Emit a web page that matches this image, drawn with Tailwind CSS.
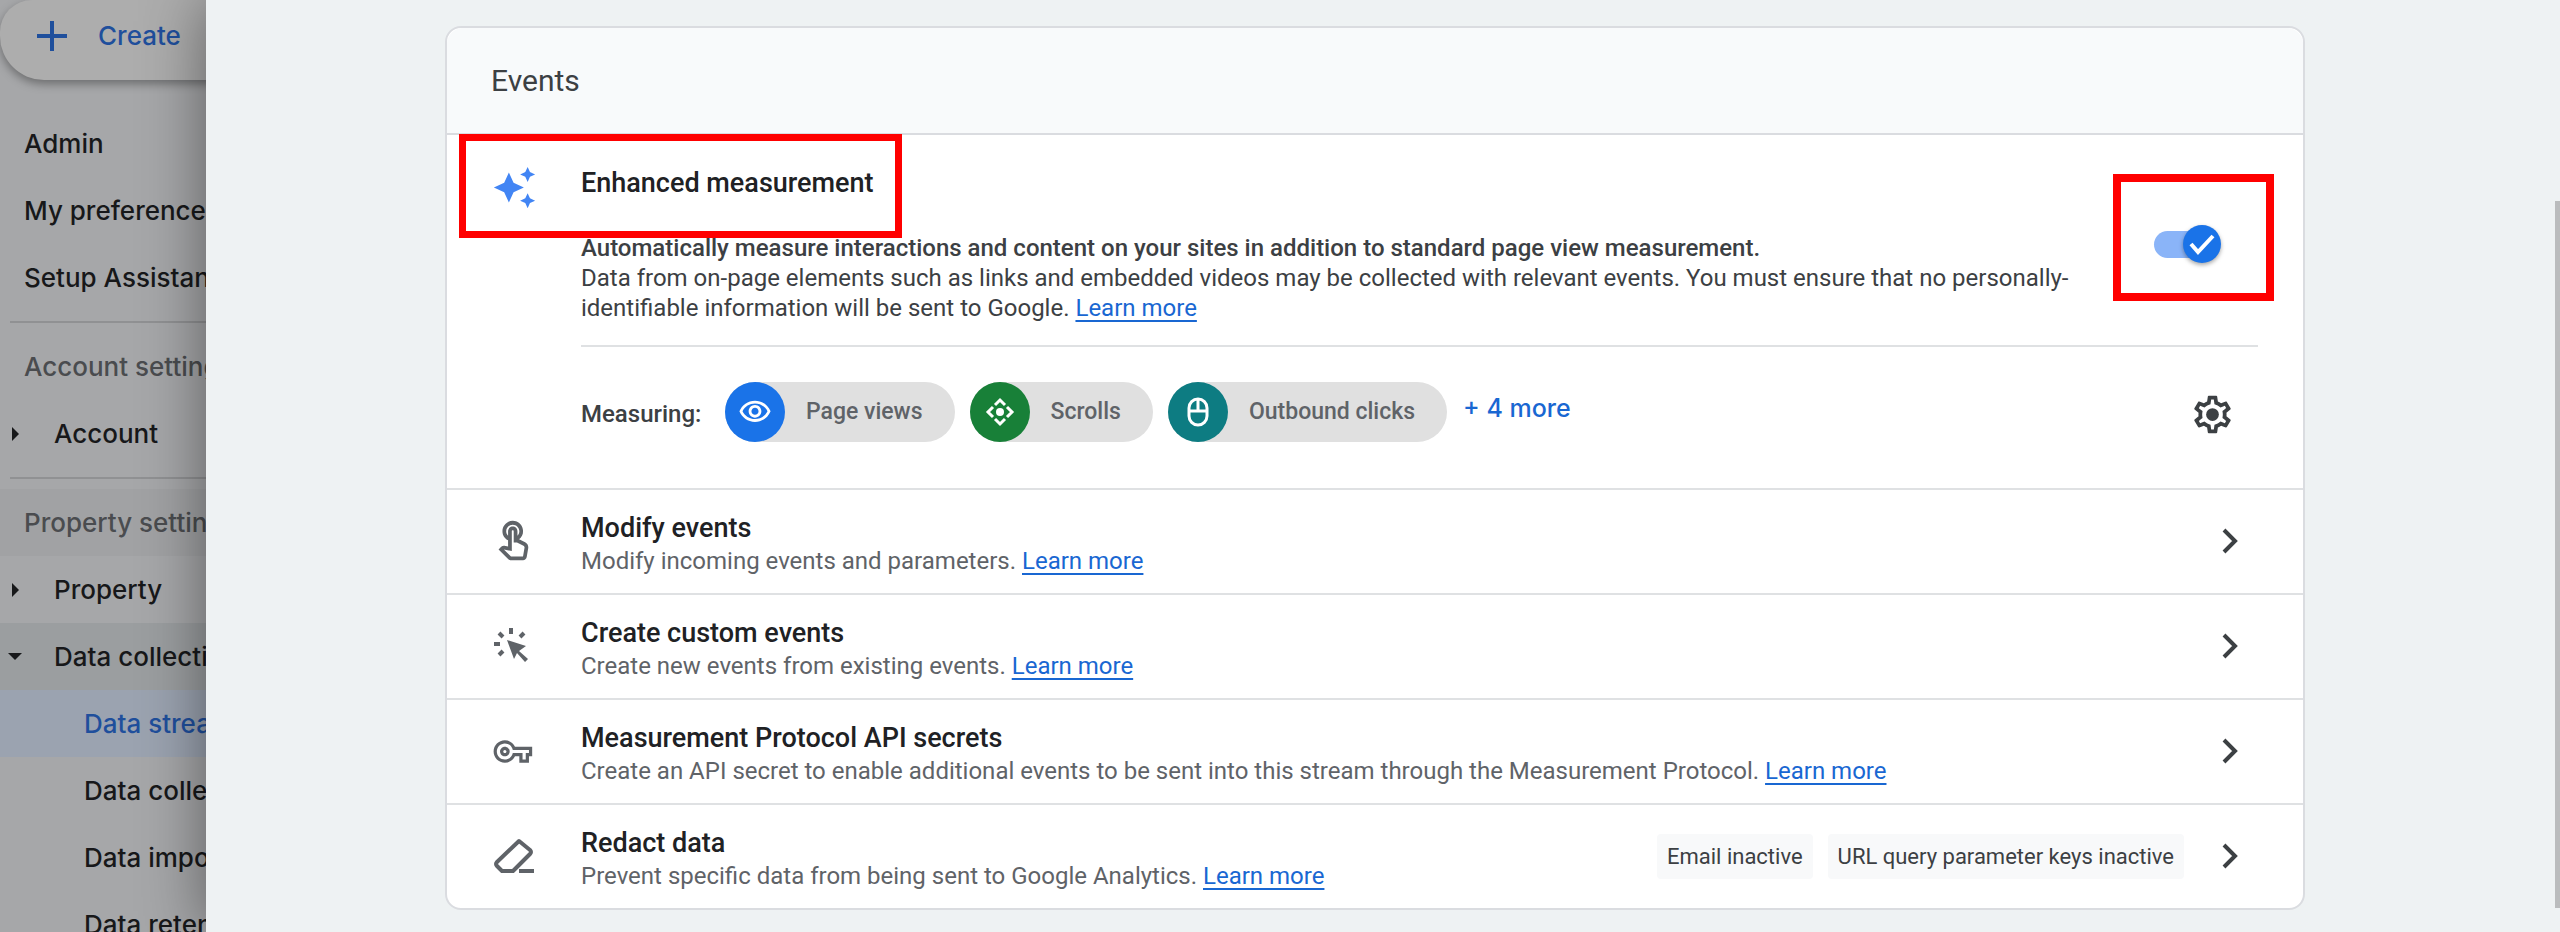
<!DOCTYPE html>
<html lang="en">
<head>
    <meta charset="UTF-8">
    <meta name="viewport" content="width=device-width, initial-scale=1.0">
    <title>Data streams</title>
    <script src="https://cdn.jsdelivr.net/npm/@tailwindcss/browser@4"></script>
</head>
<body class="h-screen overflow-hidden flex bg-[#eef2f3] text-[22px] leading-[30px] text-[#3c4043] font-['Roboto',sans-serif]">

    <!-- Sidebar, dimmed behind the panel -->
    <aside class="w-[206px] shrink-0 overflow-hidden whitespace-nowrap bg-[#a6a7a9] text-[#17181a] text-[26px] font-medium font-['Inter',sans-serif]">
        <div class="h-[110px]">
            <button type="button" class="w-[260px] h-20 pt-1 pb-3 pl-[36px] rounded-bl-[44px] rounded-tl-[32px] bg-[#adadad] shadow-[0_4px_10px_rgba(0,0,0,0.35)] flex items-center gap-[30px] text-[#1f4f9c]">
                <svg class="size-8" viewBox="0 0 32 32" fill="none" stroke="currentColor" stroke-width="4"><path d="M16 1v30M1 16h30"></path></svg>
                <span>Create</span>
            </button>
        </div>
        <nav>
            <a href="#" class="flex items-center h-[67px] pl-6">Admin</a>
            <a href="#" class="flex items-center h-[67px] pl-6">My preferences</a>
            <a href="#" class="flex items-center h-[67px] pl-6">Setup Assistant</a>
            <hr class="ml-2.5 mt-2.5 mb-2.5 border-t-2 border-[#909193]">
            <h2 class="flex items-center h-[67px] pl-6 text-[#4a4c4f]">Account settings</h2>
            <a href="#" class="flex items-center h-[67px] pl-3">
                <svg class="w-[7px] h-3.5 mr-[35px] shrink-0" viewBox="0 0 7 14" fill="currentColor"><path d="M0 0l7 7-7 7z"></path></svg>
                Account
            </a>
            <hr class="ml-2.5 mt-2.5 mb-2.5 border-t-2 border-[#909193]">
            <h2 class="flex items-center h-[67px] pl-6 bg-[#a1a2a4] text-[#4a4c4f]">Property settings</h2>
            <a href="#" class="flex items-center h-[67px] pl-3">
                <svg class="w-[7px] h-3.5 mr-[35px] shrink-0" viewBox="0 0 7 14" fill="currentColor"><path d="M0 0l7 7-7 7z"></path></svg>
                Property
            </a>
            <a href="#" class="flex items-center h-[67px] pl-2 bg-[#9b9ea0]">
                <svg class="w-3.5 h-[7px] mr-8 shrink-0" viewBox="0 0 14 7" fill="currentColor"><path d="M0 0h14l-7 7z"></path></svg>
                Data collection
            </a>
            <a href="#" class="flex items-center h-[67px] pl-[84px] bg-[#9ba3b0] text-[#1f4f9c]">Data streams</a>
            <a href="#" class="flex items-center h-[67px] pl-[84px]">Data collection</a>
            <a href="#" class="flex items-center h-[67px] pl-[84px]">Data import</a>
            <a href="#" class="flex items-center h-[67px] pl-[84px]">Data retention</a>
        </nav>
    </aside>

    <!-- Panel -->
    <main class="relative flex-1 min-w-0 pt-[26px] pl-[239px] pr-[255px] bg-[#eef2f3] shadow-[0_0_60px_rgba(0,0,0,0.45)]">
        <section class="rounded-2xl border-2 border-[#dadce0] bg-white">
            <header class="flex items-center h-[107px] px-11 rounded-t-2xl border-b-2 border-[#dadce0] bg-[#f8fafb]">
                <h1 class="text-[30px]">Events</h1>
            </header>

            <!-- Enhanced measurement -->
            <div class="relative flex gap-11 pt-[30px] pb-[46px] px-[45px]">
                <div class="absolute left-3 -top-px w-[443px] h-[104px] border-[7px] border-[#ff0000]"></div>
                <svg class="size-[45px] shrink-0 text-[#4285f4]" viewBox="0 0 24 24" fill="currentColor"><path d="M19 9l1.25-2.75L23 5l-2.75-1.25L19 1l-1.25 2.75L15 5l2.75 1.25L19 9zm-7.5.5L9 4 6.5 9.5 1 12l5.5 2.5L9 20l2.5-5.5L17 12l-5.5-2.5zM19 15l-1.25 2.75L15 19l2.75 1.25L19 23l1.25-2.75L23 19l-2.75-1.25L19 15z"></path></svg>
                <div class="flex-1 min-w-0">
                    <div class="flex items-center justify-between pb-[22px] border-b-2 border-[#dfe1e3]">
                        <div class="max-w-[1510px]">
                            <h2 class="text-[27px] leading-9 font-medium text-[#202124]">Enhanced measurement</h2>
                            <p class="mt-8 text-[24px] leading-[30px] font-medium">Automatically measure interactions and content on your sites in addition to standard page view measurement.</p>
                            <p class="text-[24px] leading-[30px]">Data from on-page elements such as links and embedded videos may be collected with relevant events. You must ensure that no personally-identifiable information will be sent to Google. <a href="#" class="text-[#1967d2] underline underline-offset-4">Learn more</a></p>
                        </div>
                        <label class="relative flex items-center w-[67px] h-[38px] mr-[37px]">
                            <input type="checkbox" role="switch" checked aria-label="Enhanced measurement" class="appearance-none w-[60px] h-[27px] rounded-full bg-[#8ab4f8]">
                            <span class="absolute right-0 top-0 flex items-center justify-center size-[38px] rounded-full bg-[#1a73e8] shadow-[0_2px_4px_rgba(0,0,0,0.35)]">
                                <svg class="size-7" viewBox="0 0 28 28" fill="none" stroke="#fff" stroke-width="4"><path d="M3 14l7 8L25 6"></path></svg>
                            </span>
                            <span class="absolute -left-[41px] -top-[51px] w-[161px] h-[127px] border-8 border-[#ff0000]"></span>
                        </label>
                    </div>
                    <div class="flex items-center mt-[35px]">
                        <span class="w-[144px] pt-1 text-[24px] font-medium">Measuring:</span>
                        <ul class="flex gap-[15px] text-[23px] font-medium text-[#5f6368]">
                            <li class="flex items-center h-[60px] pr-8 rounded-full bg-[#e0e0e0]">
                                <span class="flex items-center justify-center size-[60px] mr-[21px] rounded-full bg-[#1a73e8] text-white">
                                    <svg class="size-[34px]" viewBox="0 0 24 24" fill="currentColor"><path d="M12 6c3.79 0 7.17 2.13 8.82 5.5C19.17 14.87 15.79 17 12 17s-7.17-2.13-8.82-5.5C4.83 8.13 8.21 6 12 6m0-2C7 4 2.73 7.11 1 11.5 2.73 15.89 7 19 12 19s9.27-3.11 11-7.5C21.27 7.11 17 4 12 4zm0 5c1.38 0 2.5 1.12 2.5 2.5S13.38 14 12 14s-2.5-1.12-2.5-2.5S10.62 9 12 9m0-2c-2.48 0-4.5 2.02-4.5 4.5S9.52 16 12 16s4.5-2.02 4.5-4.5S14.48 7 12 7z"></path></svg>
                                </span>
                                Page views
                            </li>
                            <li class="flex items-center h-[60px] pr-8 rounded-full bg-[#e0e0e0]">
                                <span class="flex items-center justify-center size-[60px] mr-[21px] rounded-full bg-[#188038] text-white">
                                    <svg class="size-[34px]" viewBox="0 0 34 34" fill="none" stroke="currentColor" stroke-width="3">
                                        <circle cx="17" cy="17" r="4" fill="currentColor" stroke="none"></circle>
                                        <path d="M12 10l5-5 5 5M12 24l5 5 5-5M10 12l-5 5 5 5M24 12l5 5-5 5"></path>
                                    </svg>
                                </span>
                                Scrolls
                            </li>
                            <li class="flex items-center h-[60px] pr-8 rounded-full bg-[#e0e0e0]">
                                <span class="flex items-center justify-center size-[60px] mr-[21px] rounded-full bg-[#0d7c82] text-white">
                                    <svg class="size-[34px]" viewBox="0 0 34 34" fill="none" stroke="currentColor" stroke-width="3">
                                        <rect x="8" y="4" width="18" height="26" rx="9"></rect>
                                        <path d="M8 16h18M17 4v12"></path>
                                    </svg>
                                </span>
                                Outbound clicks
                            </li>
                        </ul>
                        <button type="button" class="ml-4 pb-2 text-[25px] font-medium text-[#1967d2] font-['Inter',sans-serif]">+ 4 more</button>
                        <button type="button" aria-label="Settings" class="ml-auto mr-[23px] pt-1">
                            <svg class="size-[45px]" viewBox="0 0 24 24" fill="currentColor"><path d="M19.43 12.98c.04-.32.07-.64.07-.98 0-.34-.03-.66-.07-.98l2.11-1.65c.19-.15.24-.42.12-.64l-2-3.46c-.09-.16-.26-.25-.44-.25-.06 0-.12.01-.17.03l-2.49 1c-.52-.4-1.08-.73-1.69-.98l-.38-2.65C14.46 2.18 14.25 2 14 2h-4c-.25 0-.46.18-.49.42l-.38 2.65c-.61.25-1.17.59-1.69.98l-2.49-1c-.06-.02-.12-.03-.18-.03-.17 0-.34.09-.43.25l-2 3.46c-.13.22-.07.49.12.64l2.11 1.65c-.04.32-.07.65-.07.98 0 .33.03.66.07.98l-2.11 1.65c-.19.15-.24.42-.12.64l2 3.46c.09.16.26.25.44.25.06 0 .12-.01.17-.03l2.49-1c.52.4 1.08.73 1.69.98l.38 2.65c.03.24.24.42.49.42h4c.25 0 .46-.18.49-.42l.38-2.65c.61-.25 1.17-.59 1.69-.98l2.49 1c.06.02.12.03.18.03.17 0 .34-.09.43-.25l2-3.46c.12-.22.07-.49-.12-.64l-2.11-1.65zm-1.98-1.71c.04.31.05.52.05.73 0 .21-.02.43-.05.73l-.14 1.13.89.7 1.08.84-.7 1.21-1.27-.51-1.04-.42-.9.68c-.43.32-.84.56-1.25.73l-1.06.43-.16 1.13-.2 1.35h-1.4l-.19-1.35-.16-1.13-1.06-.43c-.43-.18-.83-.41-1.23-.71l-.91-.7-1.06.43-1.27.51-.7-1.21 1.08-.84.89-.7-.14-1.13c-.03-.31-.05-.54-.05-.74s.02-.43.05-.73l.14-1.13-.89-.7-1.08-.84.7-1.21 1.27.51 1.04.42.9-.68c.43-.32.84-.56 1.25-.73l1.06-.43.16-1.13.2-1.35h1.39l.19 1.35.16 1.13 1.06.43c.43.18.83.41 1.23.71l.91.7 1.06-.43 1.27-.51.7 1.21-1.07.85-.89.7.14 1.13z"></path><circle cx="12" cy="12" r="3.4"></circle></svg>
                        </button>
                    </div>
                </div>
            </div>

            <!-- Rows -->
            <div class="flex items-center h-[105px] pl-[45px] pr-[51px] border-t-2 border-[#dfe1e3]">
                <svg class="size-[45px] mr-11 text-[#5f6368]" viewBox="0.5 0 24 24" fill="currentColor"><path d="M18.19 12.44l-3.24-1.62c1.29-1 2.12-2.56 2.12-4.32 0-3.03-2.47-5.5-5.5-5.5s-5.5 2.47-5.5 5.5c0 2.13 1.22 3.98 3 4.89v3.26c-2.15-.46-2.02-.44-2.26-.44-.53 0-1.03.21-1.41.59L4 16.22l5.09 5.09c.43.44 1.03.69 1.65.69h6.3c.98 0 1.81-.7 1.97-1.67l.8-4.71c.22-1.3-.43-2.58-1.62-3.18zm-.35 2.85l-.8 4.71h-6.3c-.09 0-.17-.04-.24-.1l-3.68-3.68 4.25.89V6.5c0-.28.22-.5.5-.5s.5.22.5.5v6h1.76l3.46 1.73c.4.2.62.63.55 1.06zM8.07 6.5c0-1.93 1.57-3.5 3.5-3.5s3.5 1.57 3.5 3.5c0 .95-.38 1.81-1 2.44V6.5c0-1.38-1.12-2.5-2.5-2.5s-2.5 1.12-2.5 2.5v2.44c-.62-.63-1-1.49-1-2.44z"></path></svg>
                <div class="flex-1 pt-0.5">
                    <h2 class="text-[27px] leading-9 font-medium text-[#202124]">Modify events</h2>
                    <p class="text-[24px] leading-[30px] text-[#5f6368]">Modify incoming events and parameters. <a href="#" class="text-[#1967d2] underline underline-offset-4">Learn more</a></p>
                </div>
                <button type="button" aria-label="Open Modify events">
                    <svg class="size-[45px]" viewBox="0 0 45 45" fill="none" stroke="currentColor" stroke-width="4"><path d="M17 11l11 11-11 11"></path></svg>
                </button>
            </div>
            <div class="flex items-center h-[105px] pl-[45px] pr-[51px] border-t-2 border-[#dfe1e3]">
                <svg class="size-[45px] mr-11 text-[#5f6368]" viewBox="0 0 45 45" fill="currentColor"><path d="M15 16l19 6-7 5 9 8-3 3-8-9-3 6z"></path><path d="M19 4v6M7 9l4 4M32 9l-4 4M2 20h6M7 31l4-4" fill="none" stroke="currentColor" stroke-width="4"></path></svg>
                <div class="flex-1 pt-0.5">
                    <h2 class="text-[27px] leading-9 font-medium text-[#202124]">Create custom events</h2>
                    <p class="text-[24px] leading-[30px] text-[#5f6368]">Create new events from existing events. <a href="#" class="text-[#1967d2] underline underline-offset-4">Learn more</a></p>
                </div>
                <button type="button" aria-label="Open Create custom events">
                    <svg class="size-[45px]" viewBox="0 0 45 45" fill="none" stroke="currentColor" stroke-width="4"><path d="M17 11l11 11-11 11"></path></svg>
                </button>
            </div>
            <div class="flex items-center h-[105px] pl-[45px] pr-[51px] border-t-2 border-[#dfe1e3]">
                <svg class="size-[45px] mr-11 text-[#5f6368]" viewBox="-1 -2 28 28" fill="currentColor"><path d="M22 19h-6v-4h-2.68c-1.14 2.42-3.6 4-6.32 4-3.86 0-7-3.14-7-7s3.14-7 7-7c2.72 0 5.17 1.58 6.32 4H24v6h-2v4zm-4-2h2v-4h2v-2H11.94l-.23-.67C11.01 8.34 9.11 7 7 7c-2.76 0-5 2.24-5 5s2.24 5 5 5c2.11 0 4.01-1.34 4.71-3.33l.23-.67H18v4zM7 15c-1.65 0-3-1.35-3-3s1.35-3 3-3 3 1.35 3 3-1.35 3-3 3zm0-4c-.55 0-1 .45-1 1s.45 1 1 1 1-.45 1-1-.45-1-1-1z"></path></svg>
                <div class="flex-1 pt-0.5">
                    <h2 class="text-[27px] leading-9 font-medium text-[#202124]">Measurement Protocol API secrets</h2>
                    <p class="text-[24px] leading-[30px] text-[#5f6368]">Create an API secret to enable additional events to be sent into this stream through the Measurement Protocol. <a href="#" class="text-[#1967d2] underline underline-offset-4">Learn more</a></p>
                </div>
                <button type="button" aria-label="Open Measurement Protocol API secrets">
                    <svg class="size-[45px]" viewBox="0 0 45 45" fill="none" stroke="currentColor" stroke-width="4"><path d="M17 11l11 11-11 11"></path></svg>
                </button>
            </div>
            <div class="flex items-center h-[105px] pl-[45px] pr-[51px] border-t-2 border-[#dfe1e3]">
                <svg class="size-[45px] mr-11 text-[#5f6368]" viewBox="0 0 45 45" fill="none" stroke="currentColor" stroke-width="4" stroke-linejoin="round"><path d="M27 7l11 9q2 2 0 4L21 37H10l-5-5q-2-2 0-4z"></path><path d="M27 37h15"></path></svg>
                <div class="flex-1 pt-0.5">
                    <h2 class="text-[27px] leading-9 font-medium text-[#202124]">Redact data</h2>
                    <p class="text-[24px] leading-[30px] text-[#5f6368]">Prevent specific data from being sent to Google Analytics. <a href="#" class="text-[#1967d2] underline underline-offset-4">Learn more</a></p>
                </div>
                <span class="flex items-center h-[45px] px-2.5 mr-[15px] rounded bg-[#f8f9fa]">Email inactive</span>
                <span class="flex items-center h-[45px] px-2.5 mr-[23px] rounded bg-[#f8f9fa]">URL query parameter keys inactive</span>
                <button type="button" aria-label="Open Redact data">
                    <svg class="size-[45px]" viewBox="0 0 45 45" fill="none" stroke="currentColor" stroke-width="4"><path d="M17 11l11 11-11 11"></path></svg>
                </button>
            </div>
        </section>
        <!-- Scroll thumb -->
        <div class="absolute right-0 top-[201px] bottom-6 w-[5px] bg-[#babcbd]"></div>
    </main>
</body>
</html>
